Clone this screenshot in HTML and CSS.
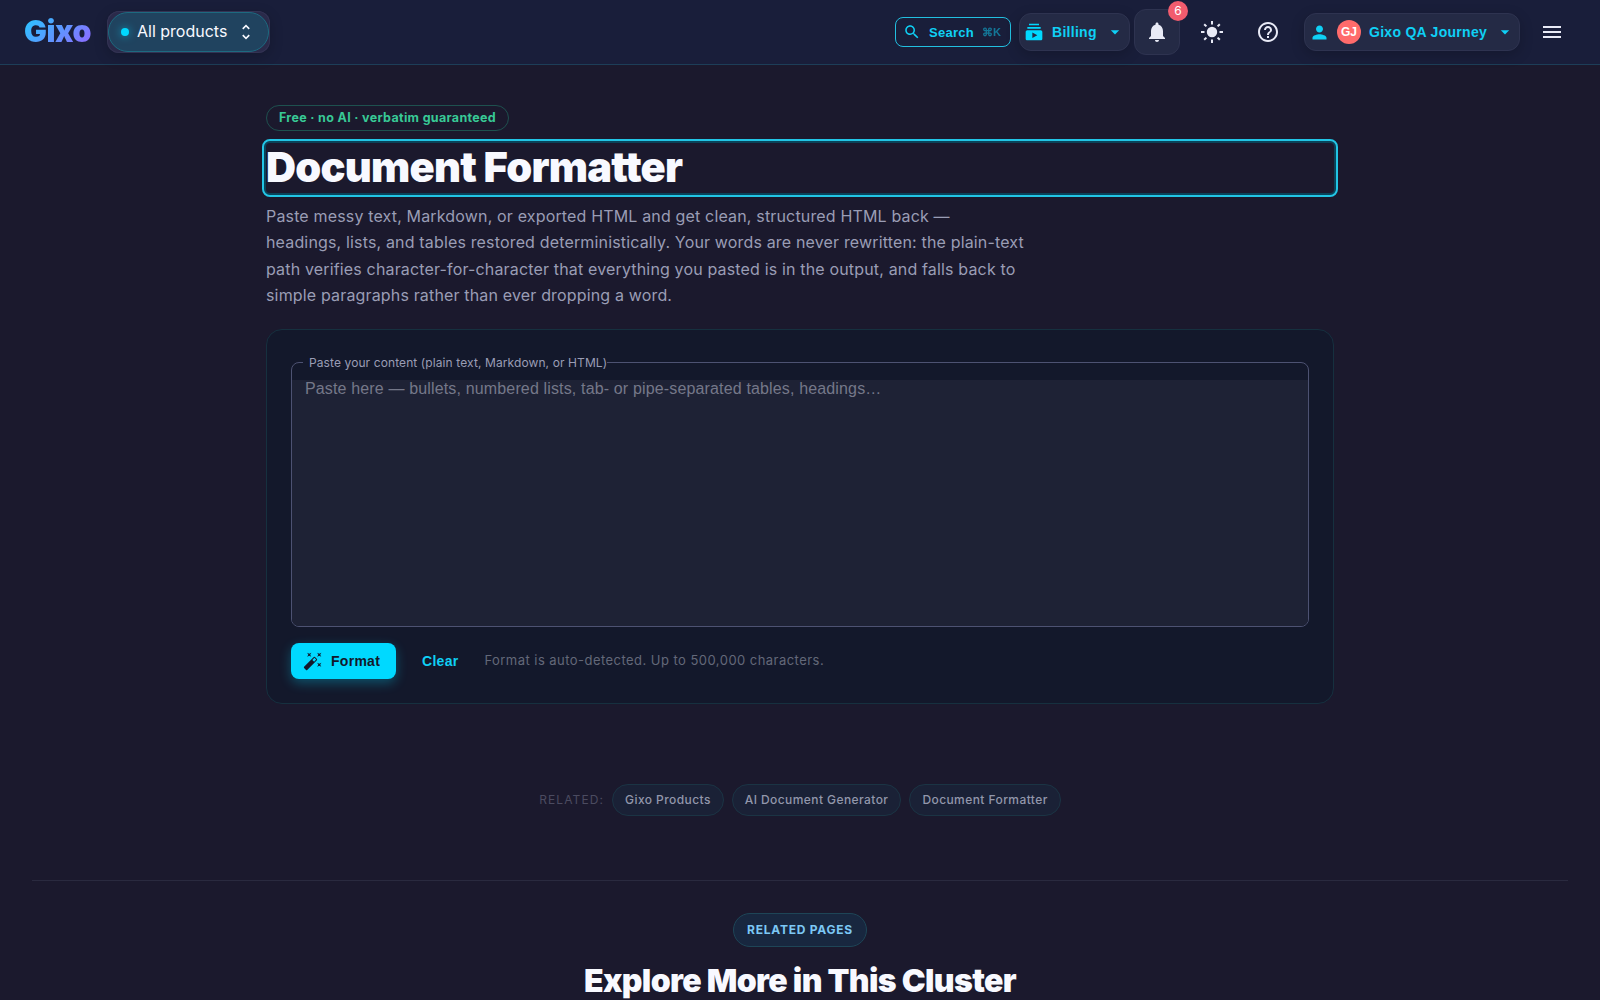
FILE: index.html
```
<!DOCTYPE html>
<html lang="en">
<head>
    <meta charset="UTF-8">
    <meta name="viewport" content="width=device-width, initial-scale=1.0">
    <title>Document Formatter | Gixo</title>
    <link rel="stylesheet" href="styles.css">
</head>
<body>
    <header class="header">
        <a class="logo" href="#">Gixo</a>
        <button class="products">
            <span class="dot"></span>
            <span class="products-label">All products</span>
            <svg class="icon icon-20" viewBox="0 0 24 24"><path d="M12 5.83 15.17 9l1.41-1.41L12 3 7.41 7.59 8.83 9zm0 12.34L8.83 15l-1.41 1.41L12 21l4.59-4.59L15.17 15z"/></svg>
        </button>

        <div class="actions">
            <button class="search">
                <svg class="icon icon-search" viewBox="0 0 24 24"><path d="M15.5 14h-.79l-.28-.27C15.41 12.59 16 11.11 16 9.5 16 5.91 13.09 3 9.5 3S3 5.91 3 9.5 5.91 16 9.5 16c1.61 0 3.09-.59 4.23-1.57l.27.28v.79l5 4.99L20.49 19zm-6 0C7.01 14 5 11.99 5 9.5S7.01 5 9.5 5 14 7.01 14 9.5 11.99 14 9.5 14"/></svg>
                <span>Search</span>
                <span class="shortcut">⌘K</span>
            </button>
            <button class="panel-btn billing">
                <svg class="icon icon-billing" viewBox="0 0 24 24"><path d="M20 8H4V6h16zm-2-6H6v2h12zm4 10v8c0 1.1-.9 2-2 2H4c-1.1 0-2-.9-2-2v-8c0-1.1.9-2 2-2h16c1.1 0 2 .9 2 2m-6 4-6-3.27v6.53z"/></svg>
                <span class="panel-label">Billing</span>
                <svg class="icon icon-20 icon-arrow" viewBox="0 0 24 24"><path d="m7 10 5 5 5-5z"/></svg>
            </button>
            <button class="bell">
                <svg class="icon icon-24" viewBox="0 0 24 24"><path d="M12 22c1.1 0 2-.9 2-2h-4c0 1.1.89 2 2 2m6-6v-5c0-3.07-1.64-5.64-4.5-6.32V4c0-.83-.67-1.5-1.5-1.5s-1.5.67-1.5 1.5v.68C7.63 5.36 6 7.92 6 11v5l-2 2v1h16v-1z"/></svg>
                <span class="badge">6</span>
            </button>
            <button class="icon-btn theme">
                <svg class="icon icon-24" viewBox="0 0 24 24"><path d="M12 6.8a5.2 5.2 0 1 0 0 10.4 5.2 5.2 0 0 0 0-10.4M11 1h2v3.5h-2zm0 18.5h2V23h-2zM1 11h3.5v2H1zm18.5 0H23v2h-3.5zM4.9 3.5l2.2 2.2-1.4 1.4-2.2-2.2zm13.4 13.4 2.2 2.2-1.4 1.4-2.2-2.2zM3.5 19.1l2.2-2.2 1.4 1.4-2.2 2.2zM16.9 5.7l2.2-2.2 1.4 1.4-2.2 2.2z"/></svg>
            </button>
            <button class="icon-btn help">
                <svg class="icon icon-24" viewBox="0 0 24 24"><path d="M11 18h2v-2h-2zm1-16C6.48 2 2 6.48 2 12s4.48 10 10 10 10-4.48 10-10S17.52 2 12 2m0 18c-4.41 0-8-3.59-8-8s3.59-8 8-8 8 3.59 8 8-3.59 8-8 8m0-14c-2.21 0-4 1.79-4 4h2c0-1.1.9-2 2-2s2 .9 2 2c0 2-3 1.75-3 5h2c0-2.25 3-2.5 3-5 0-2.21-1.79-4-4-4"/></svg>
            </button>
            <button class="panel-btn user">
                <svg class="icon icon-person" viewBox="0 0 24 24"><path d="M12 12c2.21 0 4-1.79 4-4s-1.79-4-4-4-4 1.79-4 4 1.79 4 4 4m0 2c-2.67 0-8 1.34-8 4v2h16v-2c0-2.66-5.33-4-8-4"/></svg>
                <span class="avatar">GJ</span>
                <span class="panel-label">Gixo QA Journey</span>
                <svg class="icon icon-20 icon-arrow" viewBox="0 0 24 24"><path d="m7 10 5 5 5-5z"/></svg>
            </button>
            <button class="icon-btn menu">
                <svg class="icon icon-24" viewBox="0 0 24 24"><path d="M3 18h18v-2H3zm0-5h18v-2H3zm0-7v2h18V6z"/></svg>
            </button>
        </div>
    </header>

    <main class="container">
        <span class="chip">Free · no AI · verbatim guaranteed</span>
        <h1 class="title">Document Formatter</h1>
        <p class="intro">Paste messy text, Markdown, or exported HTML and get clean, structured HTML back — headings, lists, and tables restored deterministically. Your words are never rewritten: the plain-text path verifies character-for-character that everything you pasted is in the output, and falls back to simple paragraphs rather than ever dropping a word.</p>

        <section class="card">
            <fieldset class="field">
                <label class="field-label" for="content">Paste your content (plain text, Markdown, or HTML)</label>
                <textarea class="field-input" id="content" placeholder="Paste here — bullets, numbered lists, tab- or pipe-separated tables, headings…"></textarea>
            </fieldset>
            <div class="card-actions">
                <button class="format">
                    <svg class="icon icon-20 icon-wand" viewBox="0 0 24 24"><path d="M7.5 5.6 10 7 8.6 4.5 10 2 7.5 3.4 5 2l1.4 2.5L5 7zm12 9.8L17 14l1.4 2.5L17 19l2.5-1.4L22 19l-1.4-2.5L22 14zM22 2l-2.5 1.4L17 2l1.4 2.5L17 7l2.5-1.4L22 7l-1.4-2.5zm-7.63 5.29a.996.996 0 0 0-1.41 0L1.29 18.96c-.39.39-.39 1.02 0 1.41l2.34 2.34c.39.39 1.02.39 1.41 0L16.7 11.05c.39-.39.39-1.02 0-1.41zm-1.03 5.49-2.12-2.12 2.44-2.44 2.12 2.12z"/></svg>
                    <span>Format</span>
                </button>
                <button class="clear">Clear</button>
                <span class="hint">Format is auto-detected. Up to 500,000 characters.</span>
            </div>
        </section>
    </main>

    <nav class="related">
        <span class="related-label">RELATED:</span>
        <a class="related-link" href="#">Gixo Products</a>
        <a class="related-link" href="#">AI Document Generator</a>
        <a class="related-link" href="#">Document Formatter</a>
    </nav>

    <section class="cluster">
        <span class="cluster-chip">RELATED PAGES</span>
        <h2 class="cluster-title">Explore More in This Cluster</h2>
    </section>
</body>
</html>
```
FILE: styles.css
```
* {
    box-sizing: border-box;
}
body {
    margin: 0;
    height: 1000px;
    overflow: hidden;
    background-color: #1b192d;
    color: #f8f9ff;
    font-family: Inter, sans-serif;
}
button {
    margin: 0;
    padding: 0;
    border: 0;
    background: none;
    color: inherit;
    font-family: "Liberation Sans", Arial, sans-serif;
    cursor: pointer;
}
a {
    text-decoration: none;
}
.icon {
    display: block;
    flex: none;
    fill: currentColor;
}
.icon-20 {
    width: 20px;
    height: 20px;
}
.icon-24 {
    width: 24px;
    height: 24px;
}

/* Header */
.header {
    display: flex;
    align-items: center;
    height: 65px;
    padding: 0 24px;
    border-bottom: 1px solid #1d3e58;
    background-color: #191e3a;
}
.logo {
    width: 67px;
    padding-bottom: 2px;
    font-size: 30.4px;
    font-weight: 900;
    letter-spacing: -0.5px;
    background: linear-gradient(135deg, #22ccff 0%, #8b6cff 90%);
    -webkit-background-clip: text;
    background-clip: text;
    color: transparent;
}
.products {
    display: flex;
    align-items: center;
    width: 163px;
    height: 42px;
    margin-left: 16px;
    border-radius: 12px;
    background-color: #2a2a4a;
    box-shadow: inset 0 0 0 1px #333353, 0 4px 14px rgba(0, 0, 0, 0.2);
    position: relative;
    z-index: 0;
}
.products::before {
    content: "";
    position: absolute;
    inset: 1px;
    z-index: -1;
    border: 1px solid #1d6a80;
    border-radius: 20px;
    background-color: #20435f;
}
.dot {
    width: 8px;
    height: 8px;
    margin-left: 14px;
    border-radius: 50%;
    background-color: #00d9ff;
    box-shadow: 0 0 8px rgba(0, 217, 255, 0.6);
}
.products-label {
    width: 99px;
    margin-left: 8px;
    padding-bottom: 2px;
    font-family: Inter, sans-serif;
    font-size: 16px;
    text-align: left;
    white-space: nowrap;
}
.actions {
    display: flex;
    align-items: center;
    margin-left: auto;
}
.search {
    display: flex;
    align-items: center;
    width: 116px;
    height: 30px;
    padding-left: 7px;
    border: 1px solid #22bfe0;
    border-radius: 8px;
    color: #0fd0f5;
    font-size: 13px;
    font-weight: 700;
    letter-spacing: 0.26px;
}
.icon-search {
    width: 18px;
    height: 18px;
    margin-right: 8px;
}
.shortcut {
    margin-left: 8px;
    opacity: 0.5;
    font-size: 11px;
    letter-spacing: 0.2px;
}
.panel-btn {
    display: flex;
    align-items: center;
    height: 38px;
    border: 1px solid #2e3350;
    border-radius: 12px;
    background-color: #242a45;
    box-shadow: 0 4px 14px rgba(0, 0, 0, 0.2);
    color: #0fd0f5;
    font-size: 14px;
    font-weight: 700;
    letter-spacing: 0.28px;
}
.panel-label {
    white-space: nowrap;
}
.billing {
    width: 111px;
    margin-left: 8px;
    padding-left: 4px;
}
.icon-billing {
    width: 20px;
    height: 20px;
    margin-right: 8px;
    color: #00d9ff;
}
.icon-arrow {
    margin-left: auto;
    margin-right: 4px;
}
.bell {
    display: flex;
    align-items: center;
    justify-content: center;
    position: relative;
    width: 46px;
    height: 46px;
    margin-left: 4px;
    border: 1px solid #2e3350;
    border-radius: 12px;
    background-color: #242a45;
    color: #e8eaf6;
}
.badge {
    position: absolute;
    top: -9px;
    right: -9px;
    width: 20px;
    height: 20px;
    border-radius: 50%;
    background-color: #f25c6e;
    color: #fff;
    font-family: Inter, sans-serif;
    font-size: 12px;
    line-height: 20px;
}
.icon-btn {
    display: flex;
    align-items: center;
    justify-content: center;
    width: 40px;
    height: 40px;
    color: #e8eaf6;
}
.theme {
    margin-left: 12px;
}
.help {
    margin-left: 16px;
}
.user {
    width: 216px;
    margin-left: 16px;
    padding-left: 4px;
}
.icon-person {
    width: 21px;
    height: 21px;
}
.avatar {
    width: 24px;
    height: 24px;
    margin-left: 7px;
    margin-right: 8px;
    border-radius: 50%;
    background-color: #ff6b6b;
    color: #fff;
    font-size: 12px;
    line-height: 24px;
    letter-spacing: 0;
}
.menu {
    width: 24px;
    margin-left: 20px;
    margin-right: 12px;
}

/* Formatter */
.container {
    display: flex;
    flex-direction: column;
    width: 1068px;
    margin: 0 auto;
    padding-top: 40px;
}
.chip {
    align-self: flex-start;
    width: 243px;
    height: 26px;
    border: 1px solid #1e514f;
    border-radius: 13px;
    color: #38c996;
    font-size: 12.5px;
    font-weight: 700;
    line-height: 24px;
    text-align: center;
    white-space: nowrap;
    letter-spacing: 0.33px;
}
.title {
    height: 50px;
    margin: 12px 0 10px;
    border-radius: 4px;
    outline: 2px solid #22c5e5;
    outline-offset: 2px;
    box-shadow: 0 0 0 2px #0a4359;
    font-size: 41.6px;
    font-weight: 900;
    line-height: 48px;
    letter-spacing: -0.78px;
}
.intro {
    max-width: 760px;
    margin: 0 0 20px;
    color: #9a9db5;
    font-size: 16px;
    line-height: 26.4px;
    letter-spacing: 0.16px;
}
.card {
    height: 375px;
    padding: 32px 24px 0;
    border: 1px solid #16303f;
    border-radius: 16px;
    background-color: #13182b;
}
.field {
    position: relative;
    min-width: 0;
    height: 265px;
    margin: 0;
    padding: 17px 0 0;
    border: 1px solid #4d5272;
    border-radius: 8px;
}
.field-label {
    position: absolute;
    top: -9px;
    left: 11px;
    padding: 0 0 0 6px;
    background-color: #13182b;
    color: #9a9db5;
    font-size: 12px;
    line-height: 17px;
    letter-spacing: 0.1px;
    white-space: nowrap;
}
.field-input {
    display: block;
    width: 100%;
    height: 246px;
    padding: 0 13px;
    border: 0;
    border-radius: 0 0 7px 7px;
    outline: 0;
    resize: none;
    background-color: #1e2235;
    color: #f8f9ff;
    font-family: "Liberation Sans", Arial, sans-serif;
    font-size: 16px;
    line-height: 18px;
    letter-spacing: 0.15px;
}
.field-input::placeholder {
    color: #757889;
}
.card-actions {
    display: flex;
    align-items: center;
    height: 36px;
    margin-top: 16px;
}
.format {
    display: flex;
    align-items: center;
    width: 105px;
    height: 36px;
    padding-left: 12px;
    border-radius: 8px;
    background-color: #00d9ff;
    box-shadow: 0 4px 12px rgba(0, 217, 255, 0.3);
    color: #13182b;
    font-size: 14px;
    font-weight: 700;
    letter-spacing: 0.28px;
}
.icon-wand {
    margin-right: 8px;
}
.clear {
    margin-left: 26px;
    color: #0fd0f5;
    font-size: 14px;
    font-weight: 700;
    letter-spacing: 0.28px;
}
.hint {
    margin-left: 26px;
    padding-bottom: 1px;
    color: #636879;
    font-size: 13px;
    letter-spacing: 0.46px;
}

/* Related links */
.related {
    display: flex;
    align-items: center;
    justify-content: center;
    gap: 8px;
    margin-top: 80px;
}
.related-label {
    color: #4b4b60;
    font-size: 12px;
    letter-spacing: 1.1px;
}
.related-link {
    height: 32px;
    padding: 0 12px;
    border: 1px solid #1b3444;
    border-radius: 16px;
    background-color: #1a2136;
    color: #9297ab;
    font-size: 12px;
    font-weight: 500;
    line-height: 30px;
    letter-spacing: 0.42px;
}
.cluster {
    display: flex;
    flex-direction: column;
    align-items: center;
    margin: 64px 32px 0;
    padding-top: 32px;
    border-top: 1px solid #2a2a3f;
}
.cluster-chip {
    width: 134px;
    height: 34px;
    border: 1px solid #1e4557;
    border-radius: 17px;
    background-color: #18273f;
    color: #7cc8f5;
    font-size: 12px;
    font-weight: 700;
    line-height: 32px;
    text-align: center;
    letter-spacing: 0.75px;
}
.cluster-title {
    margin: 14px 0 0;
    font-size: 32px;
    font-weight: 900;
    line-height: 40px;
    letter-spacing: -0.64px;
    white-space: nowrap;
}
```
